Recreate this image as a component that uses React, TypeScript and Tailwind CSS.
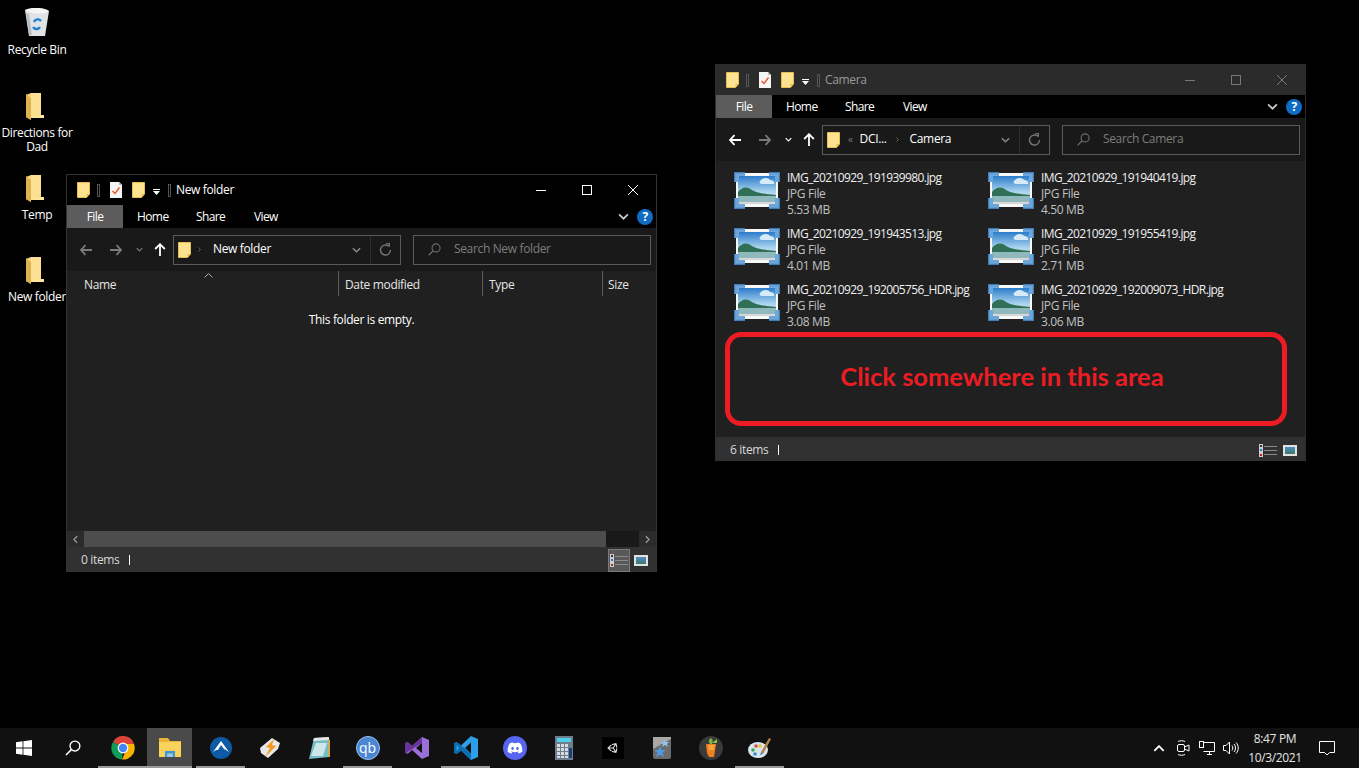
import { FaDiscord, FaUnity } from "react-icons/fa";

const photos = [
  { name: "IMG_20210929_191939980.jpg", size: "5.53 MB" },
  { name: "IMG_20210929_191940419.jpg", size: "4.50 MB" },
  { name: "IMG_20210929_191943513.jpg", size: "4.01 MB" },
  { name: "IMG_20210929_191955419.jpg", size: "2.71 MB" },
  { name: "IMG_20210929_192005756_HDR.jpg", size: "3.08 MB" },
  { name: "IMG_20210929_192009073_HDR.jpg", size: "3.06 MB" },
];

function SmallFolder({ className }: { className: string }) {
  return (
    <svg viewBox="0 0 13 16" className={className}>
      <path d="M0.5 0.5H12.5V12L9.5 15.5H0.5Z" fill="#fde28f" stroke="#e8bd52" />
      <path d="M9.5 15.5V12H12.5Z" fill="#e8bd52" />
    </svg>
  );
}

function TallFolder({ className }: { className: string }) {
  return (
    <svg viewBox="0 0 18 27" className={className}>
      <path d="M0 2L5 0H15V22H18V25H5V27L0 24Z" fill="#f6d77f" />
      <path d="M0 2V24L5 27V5L0 1Z" fill="#dfb251" />
      <path d="M5 22H18V25H5Z" fill="#fde59b" />
      <path d="M5 0H15V20L5 25Z" fill="#fbe191" />
    </svg>
  );
}

function CheckDoc() {
  return (
    <svg viewBox="0 0 12 16" className="h-4 w-3">
      <path d="M0 0H9L12 3V16H0Z" fill="#f4f4f4" />
      <path d="M9 0V3H12" fill="#bbb" />
      <path d="M2.5 9L5 11.5L9.5 5.5" fill="none" stroke="#e8532c" strokeWidth="1.4" />
    </svg>
  );
}

function Arrow({ left, color }: { left?: boolean; color: string }) {
  return (
    <svg viewBox="0 0 12 12" className={left ? "h-3 w-3 rotate-180" : "h-3 w-3"}>
      <path d="M0 6H11M6.5 1.2L11 6L6.5 10.8" fill="none" stroke={color} strokeWidth="1.8" />
    </svg>
  );
}

function UpArrow() {
  return (
    <svg viewBox="0 0 12 13" className="h-[13px] w-3">
      <path d="M6 13V1.5M1.2 6L6 1.2L10.8 6" fill="none" stroke="#fff" strokeWidth="1.8" />
    </svg>
  );
}

function Chev({ color, className }: { color: string; className: string }) {
  return (
    <svg viewBox="0 0 10 6" className={className}>
      <path d="M1 1L5 5L9 1" fill="none" stroke={color} strokeWidth="1.6" />
    </svg>
  );
}

function Refresh() {
  return (
    <svg viewBox="0 0 12 12" className="h-[13px] w-[13px]">
      <path d="M9 3A4.6 4.6 0 1 0 10.6 6.5" fill="none" stroke="#777" strokeWidth="1.3" />
      <path d="M6.5 0L9.5 0.2V3.5" fill="none" stroke="#777" strokeWidth="1.3" />
    </svg>
  );
}

function SearchGlass({ color, className }: { color: string; className: string }) {
  return (
    <svg viewBox="0 0 14 14" className={className}>
      <circle cx="8.7" cy="5.3" r="4.3" fill="none" stroke={color} strokeWidth="1.2" />
      <path d="M5.6 8.4L0.8 13.2" stroke={color} strokeWidth="1.3" />
    </svg>
  );
}

function PhotoIcon({ className }: { className: string }) {
  return (
    <svg viewBox="0 0 46 38" className={className}>
      <defs>
        <linearGradient id="skyG" x1="0" y1="0" x2="0" y2="1">
          <stop offset="0" stopColor="#2b7ccb" />
          <stop offset="0.6" stopColor="#a9d3ee" />
          <stop offset="1" stopColor="#e3f1f8" />
        </linearGradient>
      </defs>
      <rect x="2" y="2" width="42" height="34" fill="#f8f8f8" />
      <rect x="4" y="5" width="38" height="26" fill="url(#skyG)" />
      <path d="M27 9C30 6 35 7 36 9C39 9 41 11 40 13H28C25 13 25 10 27 9Z" fill="#d6ebf7" />
      <path d="M4 21C8 16 13 15 18 19C23 22 31 23 42 24V31H4Z" fill="#2f7056" />
      <rect x="4" y="25" width="38" height="6" fill="#8fb9bd" />
      <rect x="4" y="31" width="38" height="2" fill="#d8d8d8" />
      <path d="M0 1H11V5H5V11H0ZM35 1H46V11H41V5H35ZM0 27H5V33H11V38H0ZM41 27H46V38H35V33H41Z" fill="#6ea6da" />
      <path d="M0 1H11V2.2H1.2V11H0ZM35 1H46V11H44.8V2.2H35ZM0 27H1.2V36.8H11V38H0ZM44.8 27H46V38H35V36.8H44.8Z" fill="#3f7fc0" />
    </svg>
  );
}

function WindowControls({ active }: { active: boolean }) {
  const c = active ? "#ffffff" : "#777777";
  return (
    <div className="ml-auto flex h-full items-center">
      <div className="flex w-[46px] justify-center">
        <div className="h-px w-[10px]" style={{ backgroundColor: c }} />
      </div>
      <div className="flex w-[46px] justify-center">
        <div className="h-[10px] w-[10px] border" style={{ borderColor: c }} />
      </div>
      <div className="flex w-[46px] justify-center">
        <svg viewBox="0 0 10 10" className="h-[10px] w-[10px]">
          <path d="M0 0L10 10M10 0L0 10" stroke={c} strokeWidth="1" />
        </svg>
      </div>
    </div>
  );
}

function ViewButtons({ highlight }: { highlight: boolean }) {
  return (
    <div className="ml-auto mr-1 flex h-full items-center">
      <div
        className={
          highlight
            ? "flex h-[23px] w-[22px] items-center justify-center gap-px border border-[#7a7a7a] bg-[#585858]"
            : "flex h-[23px] w-[22px] items-center justify-center gap-px"
        }
      >
        <div className="flex h-[13px] w-1 flex-col justify-between bg-[#cfcfcf] p-px">
          <div className="h-0.5 w-0.5 bg-[#333]" />
          <div className="h-0.5 w-0.5 bg-[#2b78c8]" />
          <div className="h-0.5 w-0.5 bg-[#b22]" />
        </div>
        <div className="flex flex-col gap-[3px]">
          <div className="h-px w-[13px] bg-[#8a8a8a]" />
          <div className="h-px w-[13px] bg-[#8a8a8a]" />
          <div className="h-px w-[13px] bg-[#8a8a8a]" />
        </div>
      </div>
      <div className="mx-1 h-[11px] w-[14px] border-2 border-[#e2e2e2] bg-gradient-to-b from-[#4d8fc4] to-[#3f7a6a]" />
    </div>
  );
}

function Explorer({
  active,
  title,
  backEnabled,
  crumbs,
  search,
  status,
  children,
}: {
  active: boolean;
  title: string;
  backEnabled: boolean;
  crumbs: React.ReactNode;
  search: string;
  status: React.ReactNode;
  children: React.ReactNode;
}) {
  return (
    <>
      <div className={active ? "flex h-[30px] items-center bg-black pl-2.5" : "flex h-[30px] items-center bg-[#2b2b2b] pl-2.5"}>
        <SmallFolder className="h-4 w-[13px]" />
        <div className="ml-[7px] h-[13px] w-[3px] border border-[#555]" />
        <div className="ml-[10px]">
          <CheckDoc />
        </div>
        <SmallFolder className="ml-[10px] h-4 w-[13px]" />
        <div className="ml-2 flex flex-col items-center gap-px pt-1">
          <div className="h-px w-[7px] bg-white" />
          <svg viewBox="0 0 7 4" className="h-1 w-[7px]">
            <path d="M0 0H7L3.5 4Z" fill="#fff" />
          </svg>
        </div>
        <div className="ml-2 h-[13px] w-[3px] border border-[#555]" />
        <span className={active ? "ml-[5px] text-white" : "ml-[5px] text-[#9a9a9a]"}>{title}</span>
        <WindowControls active={active} />
      </div>
      <div className="flex h-[23px] items-center bg-black pr-[3px] tracking-[-0.6px]">
        <div className="flex h-full w-[56px] items-center justify-center bg-[#5c5c5c] text-white">File</div>
        <span className="ml-[14px] w-[59px] text-white">Home</span>
        <span className="w-[58px] text-white">Share</span>
        <span className="text-white">View</span>
        <Chev color="#c8c8c8" className="ml-auto h-[7px] w-[11px]" />
        <div className="ml-2 flex h-4 w-4 items-center justify-center rounded-full bg-[#0f6cc4] text-[12px] leading-none font-bold text-white">
          ?
        </div>
      </div>
      <div className="flex h-[43px] items-center bg-[#191919] pl-[13px]">
        <Arrow left color={backEnabled ? "#ffffff" : "#7a7a7a"} />
        <div className="ml-[18px]">
          <Arrow color="#7a7a7a" />
        </div>
        <Chev color={backEnabled ? "#ffffff" : "#7a7a7a"} className="ml-[14px] h-[5px] w-[7px]" />
        <div className="ml-[11px]">
          <UpArrow />
        </div>
        <div className="ml-[7px] flex h-[30px] w-[228px] items-center border border-[#5a5a5a] pl-[4px]">
          <SmallFolder className="h-4 w-[13px] shrink-0" />
          <div className="flex items-center pb-px">{crumbs}</div>
          <Chev color="#8a8a8a" className="ml-auto h-[6px] w-[9px]" />
          <div className="ml-[9px] h-full w-px bg-[#2e2e2e]" />
          <div className="flex w-[29px] justify-center">
            <Refresh />
          </div>
        </div>
        <div className="ml-3 flex h-[30px] w-[238px] items-center border border-[#5a5a5a] pl-[14px] text-[#7d7d7d]">
          <SearchGlass color="#6b6b6b" className="h-[13px] w-[13px]" />
          <span className="ml-[13px] pb-px">{search}</span>
        </div>
      </div>
      <div className="flex min-h-0 flex-1 flex-col bg-[#202020] text-[#e6e6e6]">{children}</div>
      <div className="flex h-6 items-center bg-[#313131] pt-0.5 pl-[14px] text-[#d8d8d8]">{status}</div>
    </>
  );
}

function DesktopItem({ className, label, children }: { className: string; label: string; children: React.ReactNode }) {
  return (
    <div className={className}>
      {children}
      <div className="mt-1.5 w-full text-center leading-[14px] text-white">{label}</div>
    </div>
  );
}

function TaskIcon({ children, open, current }: { children: React.ReactNode; open?: boolean; current?: boolean }) {
  return (
    <div
      className={
        current
          ? "flex h-full w-[45px] items-center justify-center border-b-2 border-[#9a9a9a] bg-[#4a4a4a]"
          : open
            ? "flex h-full w-[49px] items-center justify-center px-1 shadow-[inset_0_-2px_0_#9a9a9a]"
            : "flex h-full w-[49px] items-center justify-center"
      }
    >
      {children}
    </div>
  );
}

export default function App() {
  return (
    <div className="flex h-[768px] w-[1359px] flex-col overflow-hidden bg-black font-['Open_Sans',sans-serif] text-[12px] tracking-[-0.35px]">
      <div className="relative flex-1">
        <DesktopItem className="absolute top-[8px] left-0 flex w-[74px] flex-col items-center" label="Recycle Bin">
          <svg viewBox="0 0 26 29" className="h-[29px] w-[26px]">
            <path d="M1 2L25 3L21 28H5Z" fill="#dfe3e6" />
            <path d="M1 2C6 -1 20 -1 25 3C20 7 6 6 1 2Z" fill="#f5f5f5" />
            <path d="M10 14A4 4 0 0 1 17 13M16 19A4 4 0 0 1 9 19" fill="none" stroke="#1d7fd3" strokeWidth="2.4" />
            <path d="M5 6L8 27H5L2 5Z" fill="#b8bec3" />
          </svg>
        </DesktopItem>
        <DesktopItem className="absolute top-[93px] left-0 flex w-[74px] flex-col items-center" label="Directions for Dad">
          <TallFolder className="mr-1 h-[27px] w-[18px]" />
        </DesktopItem>
        <DesktopItem className="absolute top-[175px] left-0 flex w-[74px] flex-col items-center" label="Temp">
          <TallFolder className="mr-1 h-[27px] w-[18px]" />
        </DesktopItem>
        <DesktopItem className="absolute top-[257px] left-0 flex w-[74px] flex-col items-center" label="New folder">
          <TallFolder className="mr-1 h-[27px] w-[18px]" />
        </DesktopItem>

        <div className="absolute top-[174px] left-[66px] flex h-[398px] w-[591px] flex-col border border-[#333]">
          <Explorer
            active
            title="New folder"
            backEnabled={false}
            search="Search New folder"
            crumbs={
              <>
                <Chev color="#777" className="ml-[6px] h-[7px] w-[5px] -rotate-90" />
                <span className="ml-[11px] text-white">New folder</span>
              </>
            }
            status={
              <>
                <span>0 items</span>
                <div className="ml-[10px] h-[10px] w-px bg-white" />
                <ViewButtons highlight />
              </>
            }
          >
            <div className="relative flex h-[25px] shrink-0">
              <div className="flex w-[272px] items-center border-r border-[#5a5a5a] pt-0.5 pl-[17px]">Name</div>
              <svg viewBox="0 0 9 5" className="absolute top-0.5 left-[137px] h-[5px] w-[9px]">
                <path d="M0.5 4.5L4.5 0.5L8.5 4.5" fill="none" stroke="#aaa" />
              </svg>
              <div className="flex w-[144px] items-center border-r border-[#5a5a5a] pt-0.5 pl-[6px]">Date modified</div>
              <div className="flex w-[120px] items-center border-r border-[#5a5a5a] pt-0.5 pl-[6px]">Type</div>
              <div className="flex items-center pt-0.5 pl-[5px]">Size</div>
            </div>
            <div className="mt-[15px] text-center text-white">This folder is empty.</div>
            <div className="mt-auto flex h-4 shrink-0 items-center bg-[#191919]">
              <div className="flex h-full w-[17px] items-center justify-center bg-[#2b2b2b]">
                <Chev color="#999" className="h-[5px] w-[9px] rotate-90" />
              </div>
              <div className="h-full w-[522px] bg-[#4d4d4d]" />
              <div className="ml-auto flex h-full w-[17px] items-center justify-center bg-[#2b2b2b]">
                <Chev color="#999" className="h-[5px] w-[9px] -rotate-90" />
              </div>
            </div>
          </Explorer>
        </div>

        <div className="absolute top-[64px] left-[715px] flex h-[398px] w-[591px] flex-col border border-[#2b2b2b] border-b-black">
          <Explorer
            active={false}
            title="Camera"
            backEnabled
            search="Search Camera"
            crumbs={
              <>
                <span className="ml-[8px] text-[10px] leading-none text-[#777]">«</span>
                <span className="ml-[7px] text-white">DCI...</span>
                <Chev color="#777" className="ml-2 h-[7px] w-[5px] -rotate-90" />
                <span className="ml-[10px] text-white">Camera</span>
              </>
            }
            status={
              <>
                <span>6 items</span>
                <div className="ml-[10px] h-[10px] w-px bg-white" />
                <ViewButtons highlight={false} />
              </>
            }
          >
            <div className="grid grid-cols-[254px_254px] auto-rows-[56px] pt-2 pl-[18px]">
              {photos.map((p) => (
                <div key={p.name} className="flex h-14 items-start">
                  <PhotoIcon className="mt-0.5 h-[38px] w-[46px] shrink-0" />
                  <div className="ml-[7px] pt-px leading-4 whitespace-nowrap">
                    <div className="tracking-[-0.6px] text-[#f0f0f0]">{p.name}</div>
                    <div className="text-[#c0c0c0]">JPG File</div>
                    <div className="text-[#c0c0c0]">{p.size}</div>
                  </div>
                </div>
              ))}
            </div>
            <div className="mt-[-5px] ml-[9px] flex h-[94px] w-[562px] items-center justify-center rounded-[16px] border-[5px] border-[#ed1c24] pr-2 pb-1.5 font-['Lato',sans-serif] text-[25.5px] font-bold tracking-normal text-[#ed1c24]">
              Click somewhere in this area
            </div>
          </Explorer>
        </div>
      </div>

      <div className="flex h-10 items-center bg-[#111111]">
        <div className="flex h-full w-12 items-center justify-center">
          <svg viewBox="0 0 16 16" className="h-4 w-4">
            <path d="M0 2.3L6.6 1.3V7.6H0ZM7.4 1.2L16 0V7.6H7.4ZM0 8.4H6.6V14.7L0 13.7ZM7.4 8.4H16V16L7.4 14.8Z" fill="#fff" />
          </svg>
        </div>
        <div className="flex h-full w-[50px] items-center justify-center">
          <SearchGlass color="#ffffff" className="h-4 w-4" />
        </div>
        <TaskIcon open>
          <svg viewBox="0 0 24 24" className="h-6 w-6">
            <path d="M12 12L2 6A11.5 11.5 0 0 1 23 8H12Z" fill="#db4437" />
            <path d="M12 12L2 6A11.5 11.5 0 0 0 11 23.5Z" fill="#0f9d58" />
            <path d="M12 8H23A11.5 11.5 0 0 1 11 23.5L16 12Z" fill="#f4b400" />
            <circle cx="12" cy="12" r="5.4" fill="#fff" />
            <circle cx="12" cy="12" r="4.2" fill="#4285f4" />
          </svg>
        </TaskIcon>
        <TaskIcon current>
          <svg viewBox="0 0 22 20" className="h-5 w-[22px]">
            <path d="M0 1H9L11 4H22V7H0Z" fill="#e8b53a" />
            <path d="M0 5H22V20H0Z" fill="#fbd25a" />
            <path d="M6 14H16V20H13.5V16.5H8.5V20H6Z" fill="#3a96dd" />
            <path d="M8.5 17H13.5V20H8.5Z" fill="#8fcbf3" />
          </svg>
        </TaskIcon>
        <div className="h-full w-1" />
        <TaskIcon open>
          <svg viewBox="0 0 22 22" className="h-[22px] w-[22px]">
            <circle cx="11" cy="11" r="11" fill="#0d5ba6" />
            <path d="M3 15L11 4L19 15L16 13L14 12L11 8L8 13L6 13Z" fill="#fff" />
          </svg>
        </TaskIcon>
        <TaskIcon>
          <svg viewBox="0 0 22 22" className="h-[22px] w-[22px]">
            <path d="M1 11L13 1L21 6L19 12L9 21L2 16Z" fill="#e8e8e8" />
            <path d="M15 2L7 10L11 11L6 20L17 9L13 8Z" fill="#f39a1e" />
          </svg>
        </TaskIcon>
        <TaskIcon>
          <svg viewBox="0 0 22 24" className="h-6 w-[22px]">
            <path d="M6 2L21 1V21L1 23Z" fill="#74bfc7" />
            <path d="M6 2L21 1V4L5 5Z" fill="#e6e6e6" />
            <path d="M20 6L22 3V21L20 21Z" fill="#d8a94a" />
            <path d="M8 7H19L15 20H3Z" fill="#cfe7ea" />
          </svg>
        </TaskIcon>
        <TaskIcon open>
          <div className="flex h-6 w-6 items-center justify-center rounded-full border border-[#9cc4ef] bg-[#4a86d3] text-[14px] leading-none tracking-normal text-white">
            qb
          </div>
        </TaskIcon>
        <TaskIcon>
          <svg viewBox="0 0 24 24" className="h-6 w-6">
            <path d="M17 1L24 4V20L17 23L7 14L2.5 18L0 16.5V7.5L2.5 6L7 10ZM17 7L11 12L17 17Z" fill="#9a6fd6" />
            <path d="M0 7.5L2.5 6L7 10L17 1V7L2.5 16V18L0 16.5Z" fill="#68349c" />
          </svg>
        </TaskIcon>
        <TaskIcon open>
          <svg viewBox="0 0 24 24" className="h-6 w-6">
            <path d="M17 0L24 3V21L17 24L7 14.5L2.5 18L0 16.5V7.5L2.5 6L7 9.5ZM17 6.5L11 12L17 17.5Z" fill="#2f9ee8" />
            <path d="M0 7.5L2.5 6L17 17.5V24L7 14.5L2.5 18L0 16.5ZM2.5 9V15L5.5 12Z" fill="#0b6cb0" />
          </svg>
        </TaskIcon>
        <TaskIcon>
          <div className="flex h-6 w-6 items-center justify-center rounded-full bg-[#5865f2]">
            <FaDiscord className="h-4 w-4 text-white" />
          </div>
        </TaskIcon>
        <TaskIcon>
          <svg viewBox="0 0 18 24" className="h-6 w-[18px]">
            <rect width="18" height="24" fill="#6d7d8c" />
            <rect x="2" y="2" width="14" height="4" fill="#4fd0e8" />
            <path d="M2 8H5V11H2ZM6 8H9V11H6ZM10 8H13V11H10ZM2 12H5V15H2ZM6 12H9V15H6ZM10 12H13V15H10ZM2 16H5V19H2ZM6 16H9V19H6ZM10 16H13V19H10ZM2 20H5V22H2ZM6 20H9V22H6ZM10 20H13V22H10Z" fill="#d6dce0" />
            <rect x="14" y="12" width="3" height="10" fill="#173f7a" />
          </svg>
        </TaskIcon>
        <TaskIcon>
          <div className="flex h-[22px] w-[22px] items-center justify-center bg-black">
            <FaUnity className="h-3 w-3 text-[#e5e5e5]" />
          </div>
        </TaskIcon>
        <TaskIcon>
          <svg viewBox="0 0 18 22" className="h-[22px] w-[18px]">
            <rect width="18" height="22" rx="2" fill="#6b6b6b" />
            <path d="M0 12L18 2V0H0Z" fill="#a8a8a8" />
            <path d="M12 2L13 5L16 5L14 7L15 10L12 8L9 10L10 7L8 5L11 5Z" fill="#8ec4f0" />
            <path d="M7 9L8.5 13L13 13L9.5 15.5L11 20L7 17.5L3 20L4.5 15.5L1 13L5.5 13Z" fill="#4f9ae0" />
          </svg>
        </TaskIcon>
        <TaskIcon>
          <svg viewBox="0 0 24 24" className="h-6 w-6">
            <circle cx="12" cy="12" r="12" fill="#3a3a3a" />
            <path d="M7 8H17L15 21H10L8 17Z" fill="#f07f1f" />
            <path d="M9 9H16L14.5 14H10Z" fill="#f9a441" />
            <path d="M11 8C9 5 10 3 12 2C14 3 14 6 13 8Z" fill="#7cb342" />
            <path d="M13 7L18 3L18 7Z" fill="#8bc34a" />
          </svg>
        </TaskIcon>
        <TaskIcon open>
          <svg viewBox="0 0 24 24" className="h-6 w-6">
            <ellipse cx="10" cy="14" rx="10" ry="8" fill="#d9e6ee" />
            <circle cx="5" cy="14" r="1.8" fill="#3aa655" />
            <circle cx="8" cy="10" r="1.8" fill="#e04b3f" />
            <circle cx="12" cy="10" r="1.8" fill="#e8c23a" />
            <circle cx="7" cy="18" r="1.8" fill="#3f86d6" />
            <path d="M13 16L21 2L23 3L15 18Z" fill="#b9834a" />
            <path d="M12 19L13 16L15 18Z" fill="#3f86d6" />
          </svg>
        </TaskIcon>

        <div className="ml-auto flex h-full items-center">
          <Chev color="#ffffff" className="h-[7px] w-3 rotate-180" />
          <svg viewBox="0 0 14 16" className="ml-[11px] h-4 w-[14px]" fill="none" stroke="#fff">
            <rect x="1.5" y="4.5" width="7" height="7" rx="1.5" />
            <path d="M8.5 7L13 5V11L8.5 9M2 1.5C4 0.5 7 0.5 9 1.5M2 14.5C4 15.5 7 15.5 9 14.5" />
          </svg>
          <svg viewBox="0 0 16 14" className="ml-[9px] h-[14px] w-4" fill="none" stroke="#fff">
            <path d="M4.5 1.5H15.5V10.5H4.5M8 13.5H13M10.5 10.5V13.5" />
            <rect x="0.5" y="0.5" width="4" height="6" fill="#111" />
          </svg>
          <svg viewBox="0 0 16 14" className="ml-2 h-[14px] w-4" fill="none" stroke="#fff">
            <path d="M0.5 4.5H3L6.5 1V13L3 9.5H0.5Z" />
            <path d="M9 4.5C10 6 10 8 9 9.5M11 3C13 5 13 9 11 11M13 1.5C16 4.5 16 9.5 13 12.5" />
          </svg>
          <div className="ml-[11px] flex w-[50px] flex-col items-center leading-[15px] whitespace-nowrap text-[#e6e6e6]">
            <span>8:47 PM</span>
            <span className="mt-1">10/3/2021</span>
          </div>
          <svg viewBox="0 0 16 15" className="mr-6 ml-[19px] h-[15px] w-4" fill="none" stroke="#fff">
            <path d="M0.5 0.5H15.5V11.5H10.5L8 14L5.5 11.5H0.5Z" />
          </svg>
        </div>
      </div>
    </div>
  );
}
